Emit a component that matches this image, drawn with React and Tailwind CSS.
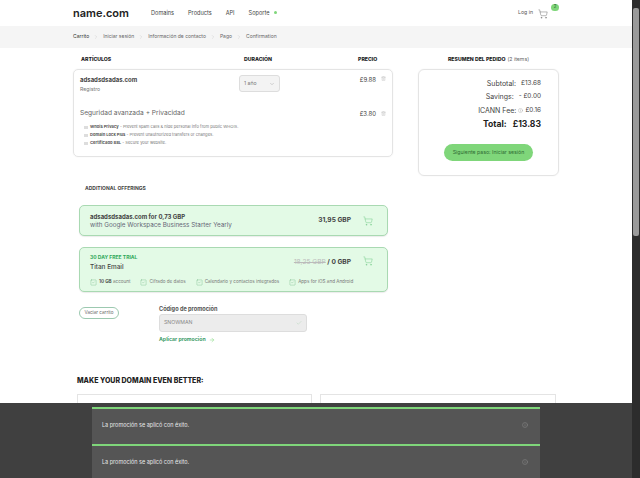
import React from 'react';
import { ShoppingCart, ChevronDown, ChevronRight, Trash2, Check, ArrowRight, Info, SquareCheck } from 'lucide-react';

const NAV = ['Domains', 'Products', 'API', 'Soporte'];
const CRUMBS = ['Carrito', 'Iniciar sesión', 'Información de contacto', 'Pago', 'Confirmation'];
const PROTECTIONS = [
  ['Whois Privacy', ' - Prevent spam calls & hide personal info from public WHOIS.'],
  ['Domain Lock Plus', ' - Prevent unauthorized transfers or changes.'],
  ['Certificado SSL', ' - Secure your website.'],
];
const TITAN = [
  ['10 GB', ' account'],
  ['', 'Cifrado de datos'],
  ['', 'Calendario y contactos integrados'],
  ['', 'Apps for iOS and Android'],
];

function Toast() {
  return (
    <div className="h-[37px] shrink-0 bg-[#555555]">
      <div className="h-[2px] bg-[#7fd67a]" />
      <div className="flex items-center justify-between pl-[10px] pr-[12px] pt-[12px] text-[5.5px] text-[#e8e8e8]">
        <span>La promoción se aplicó con éxito.</span>
        <Info size={6} className="text-[#8a8a8a]" />
      </div>
    </div>
  );
}

function Summary({ label, value, icon }) {
  return (
    <div className="flex h-[13.5px] items-center justify-end gap-[5px] text-[#444]">
      <span className="text-[7px]">{label}</span>
      {icon}
      <span className="text-[6.4px]">{value}</span>
    </div>
  );
}

export default function App() {
  return (
    <div className="relative flex h-[478px] w-[640px] overflow-hidden bg-white font-['Inter','Liberation_Sans',sans-serif] text-[#333]">
      <div className="w-[632px] shrink-0">
        <header className="flex h-[26px] items-center pl-[73px] pr-[73px]">
          <span className="w-[78px] text-[11px] font-semibold leading-none text-[#222]">name.com</span>
          <nav className="flex items-center gap-[14px] text-[5.6px] text-[#444]">
            {NAV.map((n) => <span key={n}>{n}</span>)}
            <span className="-ml-[10px] h-[3px] w-[3px] rounded-full bg-[#7fd67a]" />
          </nav>
          <div className="ml-auto flex items-start">
            <span className="mt-[1px] text-[5.2px] text-[#555]">Log in</span>
            <ShoppingCart size={10} strokeWidth={1} className="ml-[5px] mt-[1px] text-[#555]" />
            <span className="ml-[3px] -mt-[4px] flex h-[7px] w-[8px] items-center justify-center rounded-full bg-[#7fd67a] text-[4.5px] text-[#24602a]">2</span>
          </div>
        </header>

        <div className="flex h-[22px] items-center bg-[#f5f5f5] pl-[73px] text-[5px] text-[#666]">
          {CRUMBS.map((c, i) => (
            <React.Fragment key={c}>
              <span className={i === 0 ? 'text-[#333]' : ''}>{c}</span>
              {i < CRUMBS.length - 1 && <ChevronRight size={6} strokeWidth={1} className="mx-[4px] text-[#aaa]" />}
            </React.Fragment>
          ))}
        </div>

        <div className="flex pl-[73px] pt-[3px]">
          <div className="w-[320px] shrink-0">
            <div className="flex h-[18px] items-center pl-[8px] text-[5.2px] font-extrabold text-[#222]">
              <span className="w-[163px]">ARTÍCULOS</span>
              <span className="w-[114px]">DURACIÓN</span>
              <span>PRECIO</span>
            </div>
            <div className="h-[88px] rounded-[5px] border border-[#e4e4e4] pl-[6px] pr-[6px] pt-[5px] shadow-[0_0_2px_rgba(0,0,0,0.06)]">
              <div className="flex items-start">
                <div className="w-[159px]">
                  <div className="text-[6px] font-bold leading-[9px] text-[#444]">adsadsdsadas.com</div>
                  <div className="mt-[0.5px] text-[5.2px] leading-[8px] text-[#777]">Registro</div>
                </div>
                <div className="flex h-[17px] w-[41px] items-center justify-between rounded-[3px] border border-[#ddd] bg-[#f3f3f3] px-[4px] text-[5.2px] text-[#777]">
                  1 año
                  <ChevronDown size={6} className="text-[#aaa]" />
                </div>
                <span className="ml-auto text-[6px] text-[#444]">£9.88</span>
                <Trash2 size={5} className="ml-[5px] mt-[1px] text-[#bbb]" />
              </div>
              <div className="mt-[16px] flex items-center">
                <span className="text-[6.6px] text-[#666]">Seguridad avanzada + Privacidad</span>
                <span className="ml-auto text-[6px] text-[#444]">£3.80</span>
                <Trash2 size={5} className="ml-[5px] text-[#bbb]" />
              </div>
              <div className="mt-[5px] flex flex-col gap-[0.5px] pl-[4px]">
                {PROTECTIONS.map(([a, b]) => (
                  <div key={a} className="flex h-[7.5px] items-center whitespace-pre text-[4.1px] text-[#777]">
                    <span className="mr-[2px] h-[3px] w-[4px] bg-[#ddd]" />
                    <span className="font-bold text-[#555]">{a}</span>{b}
                  </div>
                ))}
              </div>
            </div>
          </div>

          <div className="ml-[25px] w-[141px] shrink-0">
            <div className="flex h-[18px] items-center justify-center text-[5.2px] text-[#666]">
              <span className="mr-[2px] font-extrabold text-[#222]">RESUMEN DEL PEDIDO</span> (2 items)
            </div>
            <div className="h-[107px] rounded-[6px] border border-[#e4e4e4] pr-[17px] pt-[7px] shadow-[0_0_2px_rgba(0,0,0,0.06)]">
              <Summary label="Subtotal:" value="£13.68" />
              <Summary label="Savings:" value="- £0.00" />
              <Summary label="ICANN Fee:" value="£0.16" icon={<Info size={5} className="-mx-[3px] text-[#aaa]" />} />
              <div className="flex items-center justify-end gap-[6px] text-[8.6px] font-bold text-[#222]">
                <span>Total:</span><span>£13.83</span>
              </div>
              <div className="ml-[25px] mt-[14px] flex h-[17px] w-[89px] items-center justify-center rounded-full bg-[#7fd67a] text-[5.2px] text-[#2f6b34]">
                Siguiente paso: Iniciar sesión
              </div>
            </div>
          </div>
        </div>

        <div className="pl-[79px]">
          <div className="mt-[8px] pl-[6px] text-[5px] font-bold leading-[8px] text-[#444]">ADDITIONAL OFFERINGS</div>
          <div className="mt-[13px] flex h-[31px] w-[309px] items-center rounded-[5px] border border-[#a9d9b2] bg-[#e3fae6] pl-[10px] pr-[14px] shadow-[0_1px_1px_rgba(0,0,0,0.08)]">
            <div>
              <div className="text-[6px] font-bold leading-[9px] text-[#444]">adsadsdsadas.com for 0,73 GBP</div>
              <div className="text-[6.3px] leading-[9px] text-[#667]">with Google Workspace Business Starter Yearly</div>
            </div>
            <span className="ml-auto mr-[12px] text-[6.6px] font-bold text-[#444]">31,95 GBP</span>
            <ShoppingCart size={10} strokeWidth={1} className="text-[#62c27a]" />
          </div>
          <div className="mt-[11px] h-[45px] w-[309px] rounded-[5px] border border-[#a9d9b2] bg-[#e3fae6] pl-[10px] pr-[14px] pt-[5px] shadow-[0_1px_1px_rgba(0,0,0,0.08)]">
            <div className="flex items-start">
              <div>
                <div className="text-[5px] font-bold leading-[8px] text-[#2fa85a]">30 DAY FREE TRIAL</div>
                <div className="mt-[1px] text-[6.4px] font-medium leading-[10px] text-[#444]">Titan Email</div>
              </div>
              <span className="ml-auto mr-[12px] mt-[5px] text-[6.6px] font-bold text-[#444]">
                <span className="font-normal text-[#bbb] line-through">18,25 GBP</span> / 0 GBP
              </span>
              <ShoppingCart size={10} strokeWidth={1} className="mt-[3px] text-[#62c27a]" />
            </div>
            <div className="mt-[7px] flex items-center gap-[10px] text-[4.6px] text-[#777]">
              {TITAN.map(([bold, text]) => (
                <span key={text} className="flex shrink-0 items-center whitespace-pre">
                  <SquareCheck size={7} strokeWidth={1} className="mr-[2px] shrink-0 text-[#4fa56a]" />
                  <b className="text-[#555]">{bold}</b>{text}
                </span>
              ))}
            </div>
          </div>

          <div className="mt-[14px] flex items-start">
            <div className="mt-[1px] flex h-[12px] w-[40px] items-center justify-center rounded-full border border-[#9cc9b0] text-[4.6px] text-[#666]">Vaciar carrito</div>
            <div className="ml-[40px] w-[148px]">
              <div className="text-[5.6px] font-bold leading-[6px] text-[#555]">Código de promoción</div>
              <div className="mt-[2px] flex h-[18px] items-center justify-between rounded-[3px] border border-[#ddd] bg-[#ececec] pl-[4px] pr-[4px] text-[5.2px] text-[#888]">
                SNOWMAN
                <Check size={6} className="text-[#b9d9bf]" />
              </div>
              <div className="mt-[4px] flex items-center gap-[3px] text-[5.2px] font-bold text-[#3d9c68]">
                Aplicar promoción
                <ArrowRight size={6} className="text-[#7fd67a]" />
              </div>
            </div>
          </div>
        </div>

        <div className="pl-[77px]">
          <div className="mt-[32px] text-[7px] font-extrabold leading-[10px] text-[#222]">MAKE YOUR DOMAIN EVEN BETTER:</div>
          <div className="mt-[8px] flex gap-[8px]">
            <div className="h-[40px] w-[235px] border border-[#e4e4e4]" />
            <div className="h-[40px] w-[236px] border border-[#e4e4e4]" />
          </div>
        </div>
      </div>

      <div className="flex w-[8px] shrink-0 flex-col bg-[#2c2c2c] pt-[8px]">
        <div className="mx-[1px] h-[228px] rounded-[2px] bg-[#9a9a9a]" />
      </div>

      <div className="absolute bottom-0 left-0 flex h-[75px] w-[632px] flex-col overflow-hidden bg-[#404040] pl-[92px] pr-[92px] pt-[4px]">
        <Toast />
        <Toast />
      </div>
    </div>
  );
}
